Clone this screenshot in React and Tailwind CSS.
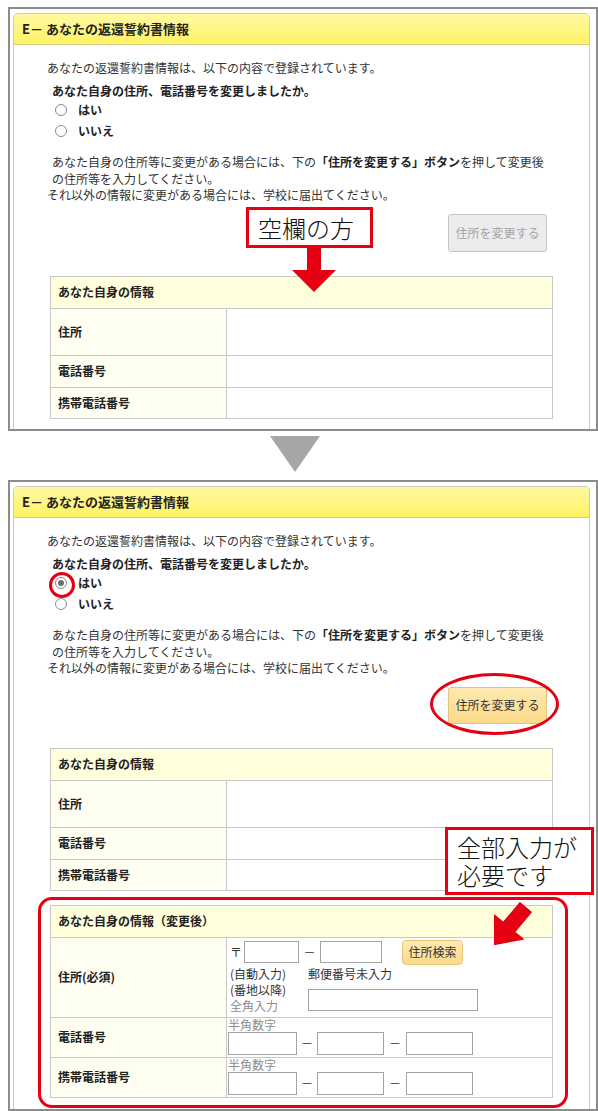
import React from "react";

const RED = "border-[#e50012]";

// small radio button like the browser default
function Radio({ checked, label }) {
  return (
    <div className="flex h-[21px] items-center ml-[41px]">
      <span className="flex h-[12px] w-[12px] items-center justify-center rounded-full border border-[#8a8a8a] bg-white">
        {checked && <span className="h-[6px] w-[6px] rounded-full bg-[#6e6e6e]" />}
      </span>
      <span className="ml-[11px] font-bold text-[#222]">{label}</span>
    </div>
  );
}

function Field({ w, h = "h-[22px]" }) {
  return <input type="text" readOnly className={`${w} ${h} border border-[#a3a3a3] bg-white outline-none`} />;
}

function InfoRow({ label, h, last, children }) {
  return (
    <div className={`flex ${h} ${last ? "" : "border-b border-[#c8c8c8]"}`}>
      <div className="flex w-[176px] shrink-0 items-center border-r border-[#c8c8c8] bg-[#fffff1] pl-[7px] font-bold text-[#222]">
        {label}
      </div>
      <div className="flex-1 bg-white">{children}</div>
    </div>
  );
}

function CurrentTable() {
  return (
    <div className="ml-[36px] mt-[24px] w-[503px] border border-[#c8c8c8]">
      <div className="flex h-[32px] items-center border-b border-[#c8c8c8] bg-[#ffffdc] pl-[7px] font-bold text-[#222]">
        あなた自身の情報
      </div>
      <InfoRow label="住所" h="h-[47px]" />
      <InfoRow label="電話番号" h="h-[32px]" />
      <InfoRow label="携帯電話番号" h="h-[30px]" last />
    </div>
  );
}

function PhoneInputs() {
  return (
    <div className="pl-[1px]">
      <div className="h-[14px] text-[12px] leading-[14px] text-[#8c8c8c]">半角数字</div>
      <div className="flex items-center">
        <Field w="w-[69px]" h="h-[23px]" />
        <span className="w-[20px] text-center">－</span>
        <Field w="w-[67px]" h="h-[23px]" />
        <span className="w-[22px] text-center">－</span>
        <Field w="w-[67px]" h="h-[23px]" />
      </div>
    </div>
  );
}

function NewTable() {
  return (
    <div className="ml-[36px] mt-[14px] w-[503px] border border-[#c8c8c8]">
      <div className="flex h-[32px] items-center border-b border-[#c8c8c8] bg-[#ffffdc] pl-[7px] font-bold text-[#222]">
        あなた自身の情報（変更後）
      </div>
      <InfoRow label="住所(必須)" h="h-[80px]">
        <div className="pl-[3px] pt-[1px]">
          <div className="flex h-[27px] items-center">
            <span>〒</span>
            <span className="ml-[2px]">
              <Field w="w-[55px]" />
            </span>
            <span className="w-[21px] text-center">－</span>
            <Field w="w-[62px]" />
            <button className="ml-[20px] h-[25px] w-[61px] rounded-[4px] border border-[#e6c677] bg-gradient-to-b from-[#feeab5] to-[#fcd98a] text-[12px] text-[#333]">
              住所検索
            </button>
          </div>
          <div className="flex leading-[16px]">
            <div className="w-[78px]">
              <div>(自動入力)</div>
              <div>(番地以降)</div>
              <div className="text-[#8c8c8c]">全角入力</div>
            </div>
            <div>
              <div>郵便番号未入力</div>
              <div className="mt-[7px]">
                <Field w="w-[170px]" />
              </div>
            </div>
          </div>
        </div>
      </InfoRow>
      <InfoRow label="電話番号" h="h-[40px]">
        <PhoneInputs />
      </InfoRow>
      <InfoRow label="携帯電話番号" h="h-[39px]" last>
        <PhoneInputs />
      </InfoRow>
    </div>
  );
}

function Panel({ className, answered }) {
  return (
    <div className={`ml-[8px] w-[590px] overflow-hidden border-2 border-[#8c8c8c] ${className}`}>
      <div className="ml-[3px] mt-[4px] h-[700px] w-[577px] rounded-t-[5px] border border-[#c9c9c9]">
        {/* section title */}
        <div className="flex h-[31px] items-center rounded-t-[4px] border-b border-[#d5cd86] bg-gradient-to-b from-[#fff9a0] to-[#fff263] pl-[8px] text-[13px] font-bold text-[#222]">
          E－ あなたの返還誓約書情報
        </div>
        <div className="pt-[14px] text-[12px] text-[#333]">
          <div className="ml-[33px] h-[17px] leading-[17px]">
            あなたの返還誓約書情報は、以下の内容で登録されています。
          </div>
          <div className="ml-[38px] mt-[6px] h-[17px] font-bold leading-[17px] text-[#222]">
            あなた自身の住所、電話番号を変更しましたか。
          </div>
          <Radio checked={answered} label="はい" />
          <Radio label="いいえ" />
          <div className="mt-[13px] whitespace-nowrap leading-[16.5px]">
            <div className="ml-[38px]">
              あなた自身の住所等に変更がある場合には、下の
              <span className="font-bold text-[#222]">「住所を変更する」ボタン</span>
              を押して変更後
            </div>
            <div className="ml-[38px]">の住所等を入力してください。</div>
            <div className="ml-[33px]">それ以外の情報に変更がある場合には、学校に届出てください。</div>
          </div>
          <div className="mr-[42px] mt-[10px] flex justify-end">
            {answered ? (
              <button className="h-[37px] w-[99px] rounded-[3px] border border-[#e3c27a] bg-gradient-to-b from-[#fee9b0] to-[#fcd98a] text-[12px] text-[#333]">
                住所を変更する
              </button>
            ) : (
              <button className="h-[38px] w-[99px] rounded-[3px] border border-[#c6c6c6] bg-[#ececec] text-[12px] text-[#a3a3a3]">
                住所を変更する
              </button>
            )}
          </div>
          <CurrentTable />
          {answered && <NewTable />}
        </div>
      </div>
    </div>
  );
}

export default function App() {
  return (
    <div className="relative h-[1111px] w-[598px] overflow-hidden bg-white pt-[7px] font-['Noto_Sans_CJK_JP','Noto_Sans',sans-serif]">
      <Panel className="h-[424px]" />

      {/* down marker between the two screens */}
      <div className="flex h-[49px] w-[598px] justify-center pt-[5px] pr-[8px]">
        <svg width="50" height="36" viewBox="0 0 50 36">
          <polygon points="0,0 50,0 25,36" fill="#a6a6a6" />
        </svg>
      </div>

      <Panel className="h-[631px]" answered />

      {/* annotations on top of the screenshots */}
      <div className={`absolute left-[246px] top-[207px] flex h-[41px] w-[127px] items-center border-[3px] ${RED} bg-white pl-[9px] text-[24px] font-light text-[#111]`}>
        空欄の方
      </div>
      <svg className="absolute left-[292px] top-[248px]" width="44" height="44" viewBox="0 0 44 44">
        <polygon points="15,0 29,0 29,22 44,22 22,44 0,22 15,22" fill="#e50012" />
      </svg>

      <div className={`absolute left-[49px] top-[572px] h-[26px] w-[26px] rounded-full border-[3px] ${RED}`} />
      <div className={`absolute left-[430px] top-[673px] h-[62px] w-[129px] rounded-[50%] border-[3px] ${RED}`} />

      <div className={`absolute left-[38px] top-[897px] h-[211px] w-[530px] rounded-[14px] border-[3px] ${RED}`} />
      <div className={`absolute left-[445px] top-[827px] h-[68px] w-[149px] border-[3px] ${RED} bg-white pl-[9px] pt-[3px] text-[24px] font-light leading-[28px] text-[#111]`}>
        <div>全部入力が</div>
        <div>必要です</div>
      </div>
      <svg className="absolute left-[490px] top-[901px] rotate-[40deg]" width="40" height="50" viewBox="0 0 40 50">
        <polygon points="12,0 28,0 28,26 40,26 20,50 0,26 12,26" fill="#e50012" />
      </svg>
    </div>
  );
}
